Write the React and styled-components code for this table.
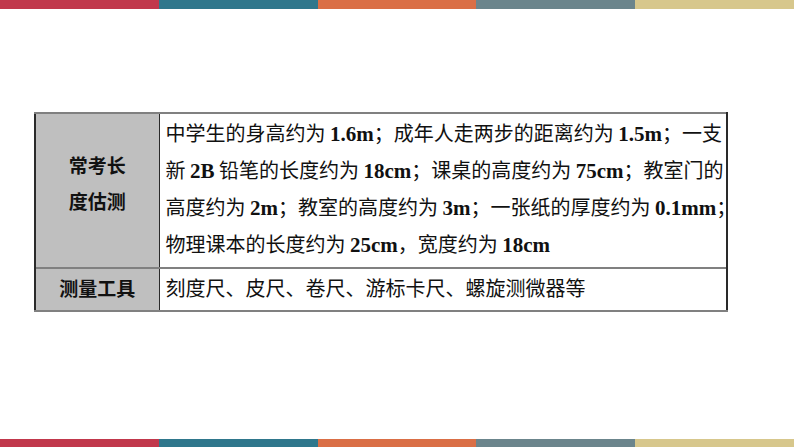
import styled, { createGlobalStyle } from "styled-components";

const GlobalStyle = createGlobalStyle`
  html, body {
    margin: 0;
    padding: 0;
    background: #ffffff;
  }
  #root {
    width: 794px;
    height: 447px;
  }
`;

const stripe = ["#c1384c", "#2f778c", "#da6f46", "#6b858c", "#d7c78c"];

const rows = [
  [
    "中学生的身高约为 ", { b: "1.6m" }, "；成年人走两步的距离约为 ", { b: "1.5m" }, "；一支",
  ],
  [
    "新 ", { b: "2B" }, " 铅笔的长度约为 ", { b: "18cm" }, "；课桌的高度约为 ", { b: "75cm" }, "；教室门的",
  ],
  [
    "高度约为 ", { b: "2m" }, "；教室的高度约为 ", { b: "3m" }, "；一张纸的厚度约为 ", { b: "0.1mm" }, "；",
  ],
  ["物理课本的长度约为 ", { b: "25cm" }, "，宽度约为 ", { b: "18cm" }],
];

export default function App() {
  return (
    <>
      <GlobalStyle />
      <Page>
        <Stripe $h={9}>
          {stripe.map((c) => (
            <Seg key={c} $c={c} />
          ))}
        </Stripe>

        <Main>
          <Table>
            <colgroup>
              <col style={{ width: 124 }} />
              <col style={{ width: 568 }} />
            </colgroup>
            <tbody>
              <tr>
                <Label $h={155}>
                  <LabelInner>
                    <LabelLine>常考长</LabelLine>
                    <LabelLine>度估测</LabelLine>
                  </LabelInner>
                </Label>
                <Cell $h={155}>
                  {rows.map((r, i) => (
                    <Line key={i}>
                      {r.map((p, j) =>
                        typeof p === "string" ? p : <Num key={j}>{p.b}</Num>
                      )}
                    </Line>
                  ))}
                </Cell>
              </tr>
              <tr>
                <Label $h={39} $last>
                  <LabelLine>测量工具</LabelLine>
                </Label>
                <Cell $h={39} $last>
                  <Line>刻度尺、皮尺、卷尺、游标卡尺、螺旋测微器等</Line>
                </Cell>
              </tr>
            </tbody>
          </Table>
        </Main>

        <Stripe $h={8}>
          {stripe.map((c) => (
            <Seg key={c} $c={c} />
          ))}
        </Stripe>
      </Page>
    </>
  );
}

/* ========================= styled ========================= */

const Page = styled.div`
  width: 794px;
  height: 447px;
  display: flex;
  flex-direction: column;
  overflow: hidden;
  background: #fff;
`;

const Stripe = styled.div`
  height: ${({ $h }) => $h}px;
  display: grid;
  grid-template-columns: repeat(5, 1fr);
  flex-shrink: 0;
`;

const Seg = styled.div`
  background: ${({ $c }) => $c};
`;

const Main = styled.div`
  flex: 1;
  padding: 103px 0 0 34px;
`;

const Table = styled.table`
  border-collapse: collapse;
  table-layout: fixed;
  width: 692px;
  font-family: "Liberation Serif", "Noto Sans CJK SC", serif;
  color: #111;
  font-size: 20px;
`;

const Label = styled.td`
  height: ${({ $h }) => $h}px;
  padding: 0 0 ${({ $last }) => ($last ? 4 : 0)}px;
  box-sizing: border-box;
  background: #bfbfbf;
  text-align: center;
  vertical-align: middle;
  border-top: 2px solid #808080;
  border-bottom: ${({ $last }) => ($last ? "2px solid #808080" : "none")};
  border-left: 2px solid #2a2a2a;
  border-right: 1px solid #2a2a2a;
`;

const LabelInner = styled.div`
  padding-bottom: 16px;
`;

const LabelLine = styled.div`
  height: 36px;
  line-height: 36px;
  font-family: "Noto Sans CJK SC", sans-serif;
  font-weight: 700;
  font-size: 19px;
  overflow: hidden;
`;

const Cell = styled.td`
  height: ${({ $h }) => $h}px;
  box-sizing: border-box;
  padding: 0 0 ${({ $last }) => ($last ? 4 : 0)}px 6px;
  vertical-align: ${({ $last }) => ($last ? "middle" : "top")};
  border-top: 2px solid #808080;
  border-bottom: ${({ $last }) => ($last ? "2px solid #808080" : "none")};
  border-right: 2px solid #2a2a2a;
`;

const Line = styled.div`
  white-space: nowrap;
  height: 37px;
  line-height: 37px;
  font-family: "Noto Sans CJK SC", sans-serif;
  font-weight: 400;
  font-size: 20px;
`;

const Num = styled.span`
  font-family: "Liberation Serif", serif;
  font-weight: 700;
  font-size: 21px;
  line-height: 1;
`;
